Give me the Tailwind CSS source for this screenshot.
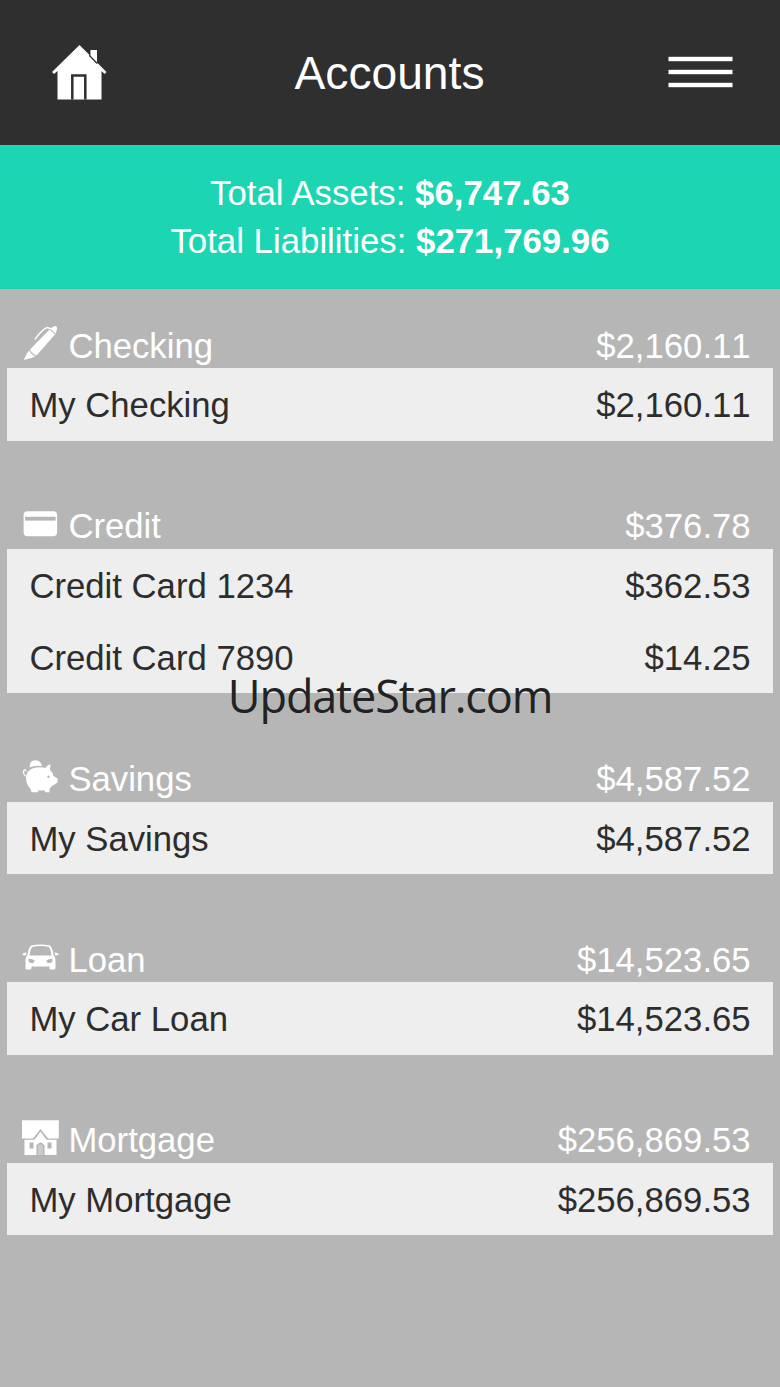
<!DOCTYPE html>
<html lang="en">
<head>
  <meta charset="UTF-8">
  <meta name="viewport" content="width=device-width, initial-scale=1.0">
  <title>Accounts</title>
  <script src="https://cdn.jsdelivr.net/npm/@tailwindcss/browser@4"></script>
</head>
<body class="relative min-h-screen overflow-x-hidden bg-[#b6b6b6] font-['Liberation_Sans',Arial,sans-serif] text-[34.7px] text-[#2d2d2d] [font-kerning:none]">

  <!-- Header -->
  <header class="flex h-[144.5px] items-center justify-between bg-[#2f2f2f] pr-[47px] pl-[52px] text-white">
    <svg class="h-[56px] w-[55px]" viewBox="0 0 55 56" fill="currentColor">
      <path d="M27.5 1 38 11.5V6h7v12.5l9.5 9.500-1.800 2L49.500 27V55.500H5.500V27L2 30 0 28z" />
      <path d="M37.800 6v6l7.500 7.500" fill="none" stroke="#2f2f2f" stroke-width="1.300" />
      <path d="M20.300 55.500V31.500h13V55.500" fill="none" stroke="#2f2f2f" stroke-width="2.500" />
    </svg>
    <h1 class="relative top-px left-[2px] text-[46.200px] leading-none">Accounts</h1>
    <svg class="h-[32px] w-[65px]" viewBox="0 0 65 32" fill="currentColor">
      <rect x=".5" y=".8" width="64" height="4.400" />
      <rect x=".5" y="13.800" width="64" height="4.400" />
      <rect x=".5" y="26.800" width="64" height="4.400" />
    </svg>
  </header>

  <!-- Totals -->
  <div class="flex h-[144.500px] flex-col justify-center bg-[#1cd5b2] pt-px text-center text-[34.800px] leading-[48px] text-white [font-kerning:normal]">
    <p>Total Assets: <b>$6,747.63</b></p>
    <p>Total Liabilities: <b>$271,769.96</b></p>
  </div>

  <!-- Account groups -->
  <main class="flex flex-col gap-[36px] px-[7.400px] pt-[7px]">
    <section>
      <div class="flex h-[72.400px] items-end justify-between pr-[22px] pb-[2.500px] pl-[14px] leading-10 text-white">
        <h2 class="flex items-center gap-[9px]">
          <svg class="relative -top-[3px] h-[36px] w-[38px]" viewBox="0 0 38 36" fill="currentColor">
            <path d="M28.500 4.500 34 9.500 15.500 30.500Q11 29 9 24.500z" />
            <path d="M29.300 3.700Q32 .8 35 1Q37 3 35.500 5.500L34.700 8.700z" />
            <path d="M8.300 25.500Q10.500 30 14.500 31.300L10.500 33 2.800 35 5.500 29z" />
            <path d="M30 4 26.500 2.500Q24 3 21 6Q16 11 14 14.500" fill="none" stroke="currentColor" stroke-width="1.500" />
          </svg>
          Checking
        </h2>
        <span>$2,160.11</span>
      </div>
      <ul class="bg-[#eee] px-[22px]">
        <li class="flex h-[72.200px] items-center justify-between pt-[2px]"><span>My Checking</span><span>$2,160.11</span></li>
      </ul>
    </section>

    <section>
      <div class="flex h-[72.400px] items-end justify-between pr-[22px] pb-[2.500px] pl-[14px] leading-10 text-white">
        <h2 class="flex items-center gap-[9px]">
          <svg class="relative -top-[3px] h-[36px] w-[38px]" viewBox="0 0 38 36" fill="currentColor">
            <rect x="2.600" y="6.300" width="33.500" height="25" rx="4" />
            <rect x="4.100" y="11.800" width="30.500" height="3.800" fill="#b6b6b6" />
          </svg>
          Credit
        </h2>
        <span>$376.78</span>
      </div>
      <ul class="bg-[#eee] px-[22px]">
        <li class="flex h-[72.200px] items-center justify-between pt-[2px]"><span>Credit Card 1234</span><span>$362.53</span></li>
        <li class="flex h-[72.200px] items-center justify-between pt-[2px]"><span>Credit Card 7890</span><span>$14.25</span></li>
      </ul>
    </section>

    <section>
      <div class="flex h-[72.400px] items-end justify-between pr-[22px] pb-[2.500px] pl-[14px] leading-10 text-white">
        <h2 class="flex items-center gap-[9px]">
          <svg class="relative -top-[3px] h-[36px] w-[38px]" viewBox="0 0 38 36" fill="currentColor">
            <path d="M8.500 9.500Q8.500 2.300 14.500 2.300Q19.500 2.300 21 8Q14 7 8.500 9.500z" />
            <path d="M5 19.500Q6 9.500 18.500 9.300Q22.500 9 24.500 10Q26.500 6.500 29.500 6.500L29 12Q31.500 14 32.500 18L36.500 20.500V24.500Q33 27 31 28L28.500 31V34.300H24V32.500H17V34.300H10.500L9.500 30.500Q5 27 5 19.500z" />
            <path d="M6.500 19Q1.500 17 2.800 12.500Q5 10.500 5 13.500" fill="none" stroke="currentColor" stroke-width="1.200" />
            <circle cx="27.500" cy="18.800" r="1.200" fill="#b6b6b6" />
          </svg>
          Savings
        </h2>
        <span>$4,587.52</span>
      </div>
      <ul class="bg-[#eee] px-[22px]">
        <li class="flex h-[72.200px] items-center justify-between pt-[2px]"><span>My Savings</span><span>$4,587.52</span></li>
      </ul>
    </section>

    <section>
      <div class="flex h-[72.400px] items-end justify-between pr-[22px] pb-[2.500px] pl-[14px] leading-10 text-white">
        <h2 class="flex items-center gap-[9px]">
          <svg class="relative -top-[2px] h-[36px] w-[38px]" viewBox="0 0 38 36" fill="currentColor">
            <path fill-rule="evenodd" d="M10 5.500Q19.500 3.500 29 5.500Q31.500 8 32.500 15Q34.500 17 34.500 20V28Q34.500 29.500 33 29.500H30Q28.500 29.500 28.500 28V26.500H10.500V28Q10.500 29.500 9 29.500H6Q4.500 29.500 4.500 28V20Q4.500 17 6.500 15Q7.500 8 10 5.500zM11.200 7Q9.300 9 8.500 15.500H30.500Q29.700 9 27.800 7Q19.500 5 11.200 7z" />
            <path d="M1.200 15Q2 12 5.500 12.500L4.800 15.500zM37.800 15Q37 12 33.500 12.500L34.200 15.500z" />
            <path d="M7.500 18.800Q12 18.800 13.800 20.500L12.500 23H9Q6.800 21.500 7.500 18.800zM31.500 18.800Q27 18.800 25.200 20.500L26.500 23H30Q32.200 21.500 31.500 18.800z" fill="#b6b6b6" />
          </svg>
          Loan
        </h2>
        <span>$14,523.65</span>
      </div>
      <ul class="bg-[#eee] px-[22px]">
        <li class="flex h-[72.200px] items-center justify-between pt-[2px]"><span>My Car Loan</span><span>$14,523.65</span></li>
      </ul>
    </section>

    <section>
      <div class="flex h-[72.400px] items-end justify-between pr-[22px] pb-[2.500px] pl-[14px] leading-10 text-white">
        <h2 class="flex items-center gap-[9px]">
          <svg class="relative -top-[3px] h-[36px] w-[38px]" viewBox="0 0 38 36" fill="currentColor">
            <path d="M1 1.300H37.800V19.500H27L19.500 10 12 19.500H1z" />
            <path d="M19.500 12.500 25.500 20.700H35.500V36H3.500V20.700H13.500z" />
            <path d="M8.500 23.500h4v6h-4zM26.500 23.500h4v6h-4z" fill="#b6b6b6" />
            <path d="M15.500 36V26.500Q19.500 20.500 23.500 26.500V36z" fill="#b6b6b6" />
            <path d="M17 36V27Q19.500 23.500 22 27V36z" fill="#ccc" />
          </svg>
          Mortgage
        </h2>
        <span>$256,869.53</span>
      </div>
      <ul class="bg-[#eee] px-[22px]">
        <li class="flex h-[72.200px] items-center justify-between pt-[2px]"><span>My Mortgage</span><span>$256,869.53</span></li>
      </ul>
    </section>
  </main>

  <!-- Watermark -->
  <div class="absolute inset-x-0 top-[671px] text-center font-['Open_Sans','Noto_Sans',sans-serif] text-[45px] leading-[50px] tracking-[-1.150px] text-[#222]">UpdateStar.com</div>

</body>
</html>
